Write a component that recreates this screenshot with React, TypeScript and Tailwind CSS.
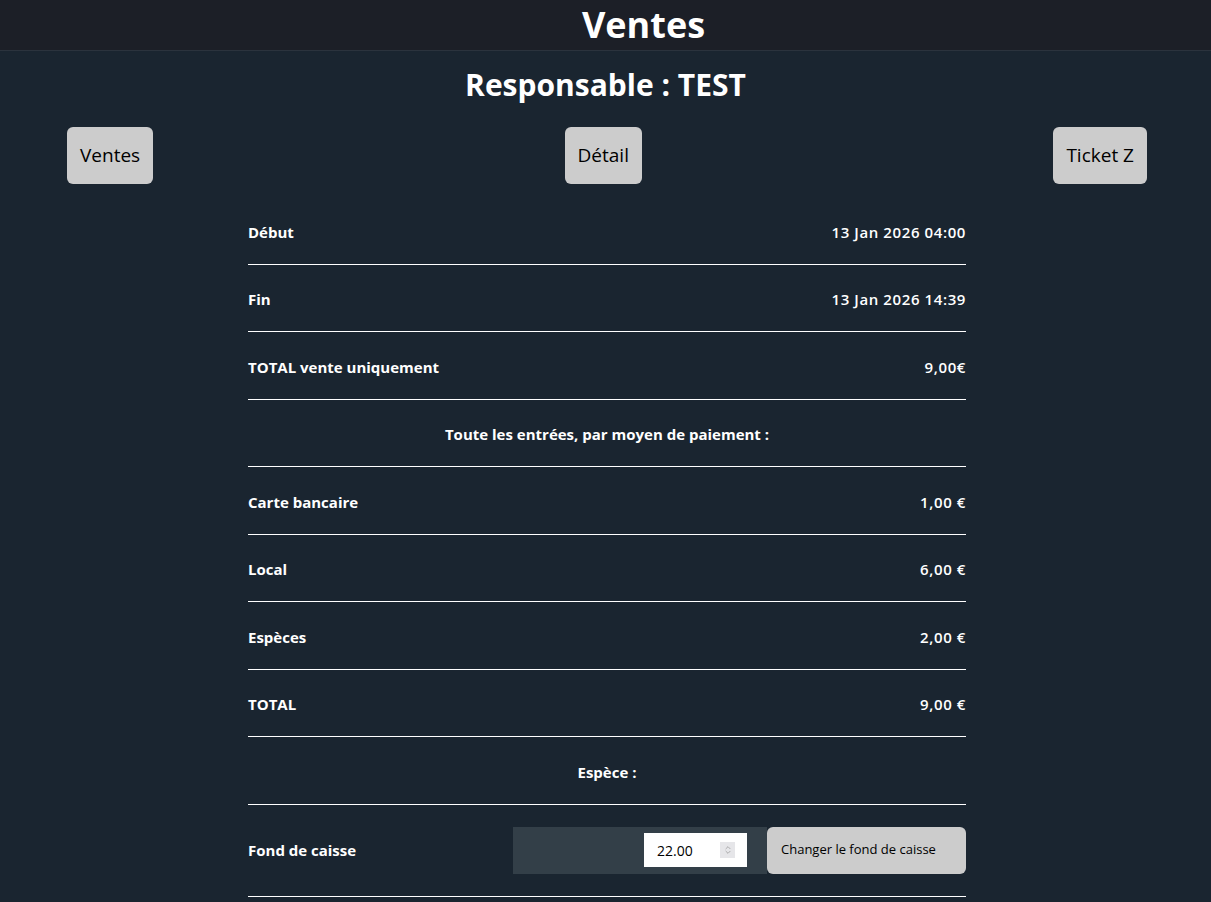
import { ChevronsUpDown } from "lucide-react";

const rows: { label: string; value: string }[] = [
  { label: "Début", value: "13 Jan 2026 04:00" },
  { label: "Fin", value: "13 Jan 2026 14:39" },
  { label: "TOTAL vente uniquement", value: "9,00€" },
];

const paiements: { label: string; value: string }[] = [
  { label: "Carte bancaire", value: "1,00 €" },
  { label: "Local", value: "6,00 €" },
  { label: "Espèces", value: "2,00 €" },
  { label: "TOTAL", value: "9,00 €" },
];

function Row({ label, value }: { label: string; value: string }) {
  return (
    <div className="flex h-[67.5px] items-center justify-between border-b-[1.5px] border-white pt-[3px]">
      <span className="font-bold">{label}</span>
      <span className="font-semibold tracking-[0.6px]">{value}</span>
    </div>
  );
}

function Title({ text }: { text: string }) {
  return (
    <div className="flex h-[67.5px] items-center justify-center border-b-[1.5px] border-white pt-[3px] font-bold">
      {text}
    </div>
  );
}

export default function App() {
  return (
    <div
      className="min-h-screen bg-[#1a2530] text-white"
      style={{ fontFamily: '"Open Sans", "DejaVu Sans", sans-serif' }}
    >
      <header className="flex h-[51px] items-center justify-center border-b border-[#2b333d] bg-[#1c1f27] pl-[76px]">
        <h1 className="text-[36px] font-bold leading-none">Ventes</h1>
      </header>

      <h2 className="mt-[15px] text-center text-[30px] font-bold leading-[38px]">
        Responsable : TEST
      </h2>

      <nav className="mt-[23px] flex justify-between pl-[67px] pr-[64px]">
        {["Ventes", "Détail", "Ticket Z"].map((b) => (
          <button
            key={b}
            className="h-[57px] rounded-md bg-[#cccccc] px-[13px] text-[19px] font-medium text-black"
          >
            {b}
          </button>
        ))}
      </nav>

      <div className="ml-[247px] mt-[13px] w-[719px] pl-px text-[15px]">
        {rows.map((r) => (
          <Row key={r.label} {...r} />
        ))}
        <Title text="Toute les entrées, par moyen de paiement :" />
        {paiements.map((r) => (
          <Row key={r.label} {...r} />
        ))}
        <Title text="Espèce :" />
        <div className="flex h-[92px] items-center border-b-[1.5px] border-white">
          <span className="w-[265px] font-bold">Fond de caisse</span>
          <div className="flex h-[47px] w-[254px] items-center justify-end bg-[#333f48] pr-[20px]">
            <div className="flex h-[34px] w-[103px] items-center justify-between bg-white pl-[13px] pr-[12px] text-[14px] text-black">
              <span>22.00</span>
              <span className="flex h-[16px] w-[15px] items-center justify-center bg-[#e6e6e9]">
                <ChevronsUpDown className="h-[10px] w-[10px] text-[#888]" strokeWidth={1.5} />
              </span>
            </div>
          </div>
          <button className="h-[47px] flex-1 rounded-md bg-[#cccccc] pl-[14px] text-left text-[13px] font-medium text-black">
            Changer le fond de caisse
          </button>
        </div>
      </div>
    </div>
  );
}
